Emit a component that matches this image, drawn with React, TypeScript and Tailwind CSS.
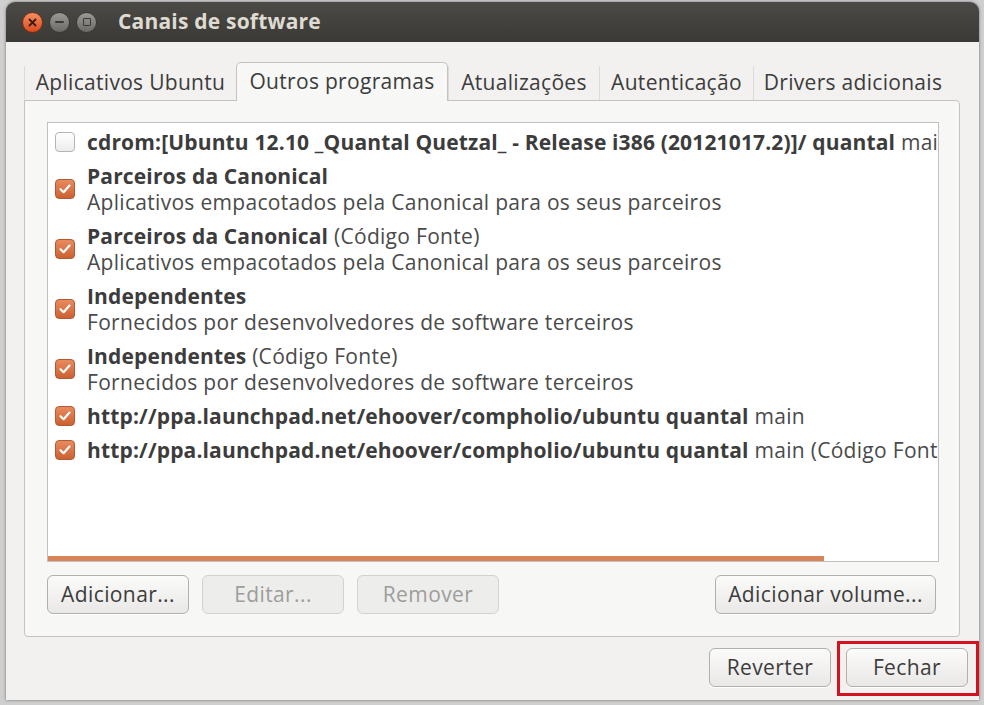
import React from 'react';

type Row = {
  checked: boolean;
  title: string;
  suffix?: string;
  desc?: string;
};

const rows: Row[] = [
  {
    checked: false,
    title: 'cdrom:[Ubuntu 12.10 _Quantal Quetzal_ - Release i386 (20121017.2)]/ quantal',
    suffix: 'main',
  },
  {
    checked: true,
    title: 'Parceiros da Canonical',
    desc: 'Aplicativos empacotados pela Canonical para os seus parceiros',
  },
  {
    checked: true,
    title: 'Parceiros da Canonical',
    suffix: '(Código Fonte)',
    desc: 'Aplicativos empacotados pela Canonical para os seus parceiros',
  },
  {
    checked: true,
    title: 'Independentes',
    desc: 'Fornecidos por desenvolvedores de software terceiros',
  },
  {
    checked: true,
    title: 'Independentes',
    suffix: '(Código Fonte)',
    desc: 'Fornecidos por desenvolvedores de software terceiros',
  },
  {
    checked: true,
    title: 'http://ppa.launchpad.net/ehoover/compholio/ubuntu quantal',
    suffix: 'main',
  },
  {
    checked: true,
    title: 'http://ppa.launchpad.net/ehoover/compholio/ubuntu quantal',
    suffix: 'main (Código Fonte)',
  },
];

const tabs = [
  { label: 'Aplicativos Ubuntu', w: 'w-[212px]', active: false },
  { label: 'Outros programas', w: 'w-[212px]', active: true },
  { label: 'Atualizações', w: 'w-[151px]', active: false },
  { label: 'Autenticação', w: 'w-[154px]', active: false },
  { label: 'Drivers adicionais', w: 'w-[199px]', active: false },
];

function CheckBox({ checked }: { checked: boolean }) {
  if (!checked) {
    return (
      <div className="h-[20px] w-[20px] shrink-0 rounded-[4px] border border-[#b4b4b4] bg-gradient-to-b from-[#ffffff] to-[#ececec]" />
    );
  }
  return (
    <div className="flex h-[20px] w-[20px] shrink-0 items-center justify-center rounded-[4px] border border-[#b25a32] bg-gradient-to-b from-[#e98a5e] to-[#cc6131]">
      <svg width="14" height="14" viewBox="0 0 14 14" fill="none">
        <path d="M2.5 7.2 L5.6 10.2 L11.5 3.6" stroke="#ffffff" strokeWidth="2.2" strokeLinecap="round" strokeLinejoin="round" />
      </svg>
    </div>
  );
}

function Button({ label, className = '', disabled = false }: { label: string; className?: string; disabled?: boolean }) {
  return (
    <div
      className={
        'flex h-[39px] items-center justify-center rounded-[6px] border text-[21px] tracking-[0.4px] ' +
        (disabled
          ? 'border-[#d2d2d0] bg-[#ededec] text-[#9d9d9b] '
          : 'border-[#b0b0ae] bg-gradient-to-b from-[#fbfbfa] to-[#e9e8e6] text-[#3c3c3c] shadow-[0_1px_0_#ffffff] ') +
        className
      }
    >
      {label}
    </div>
  );
}

export default function App() {
  return (
    <div className="h-[705px] w-[984px] overflow-hidden bg-[#cfcfcf] font-['Open_Sans',sans-serif]">
      <div className="relative ml-[6px] mt-[2px] flex h-[698px] w-[973px] flex-col overflow-hidden rounded-t-[9px] shadow-[0_0_3px_rgba(0,0,0,0.5)]">
        {/* title bar */}
        <div className="flex h-[40px] shrink-0 items-center bg-gradient-to-b from-[#4b4a46] to-[#3a3935] pl-[16px]">
          <div className="flex h-[21px] w-[21px] items-center justify-center rounded-full border border-[#7a2e12] bg-gradient-to-b from-[#f58e60] to-[#d94a1d]">
            <svg width="9" height="9" viewBox="0 0 9 9">
              <path d="M1.5 1.5 L7.5 7.5 M7.5 1.5 L1.5 7.5" stroke="#3b1a0e" strokeWidth="1.8" strokeLinecap="round" />
            </svg>
          </div>
          <div className="ml-[6px] flex h-[21px] w-[21px] items-center justify-center rounded-full border border-[#3a3936] bg-gradient-to-b from-[#9a9995] to-[#6b6a66]">
            <div className="h-[2px] w-[9px] rounded bg-[#3a3936]" />
          </div>
          <div className="ml-[6px] flex h-[21px] w-[21px] items-center justify-center rounded-full border border-[#3a3936] bg-gradient-to-b from-[#9a9995] to-[#6b6a66]">
            <div className="h-[8px] w-[8px] rounded-[1px] border-[1.5px] border-[#3a3936]" />
          </div>
          <div className="ml-[21px] text-[21px] font-bold tracking-[0.2px] text-[#dfdbd2]">Canais de software</div>
        </div>

        {/* body */}
        <div className="flex flex-1 flex-col bg-[#f2f1f0] pl-[18px] pt-[20px]">
          {/* tabs */}
          <div className="flex h-[38px] items-stretch">
            {tabs.map((t) => (
              <div
                key={t.label}
                className={
                  'flex items-center justify-center text-[21px] tracking-[0.3px] text-[#3c3c3c] ' +
                  t.w +
                  (t.active
                    ? ' relative z-10 -mb-px rounded-t-[5px] border border-b-0 border-[#c4c3c1] bg-[#f7f7f6]'
                    : ' mt-[4px] border-l border-[#dcdbd9]')
                }
              >
                {t.label}
              </div>
            ))}
          </div>

          {/* notebook page */}
          <div className="flex h-[537px] w-[936px] flex-col rounded-b-[4px] rounded-tr-[4px] border border-[#c4c3c1] bg-[#f7f7f6] px-[22px] pt-[21px]">
            <div className="flex h-[440px] w-[892px] flex-col overflow-hidden border border-[#c2c1bf] bg-white pt-[2px]">
              {rows.map((r, i) => (
                <div key={i} className="flex items-center py-[4px] pl-[7px]">
                  <CheckBox checked={r.checked} />
                  <div className="ml-[12px] min-w-0 flex-1 overflow-hidden whitespace-nowrap text-[21px] leading-[26px] tracking-[0.3px] text-[#3c3c3c]">
                    <div>
                      <span className="font-bold tracking-[0.15px]">{r.title}</span>
                      {r.suffix && <span className="text-[#4a4a4a]"> {r.suffix}</span>}
                    </div>
                    {r.desc && <div className="text-[#4a4a4a]">{r.desc}</div>}
                  </div>
                </div>
              ))}
              <div className="mt-auto h-[5px] w-[776px] bg-[#d8855c]" />
            </div>

            <div className="mt-[13px] flex">
              <Button label="Adicionar..." className="w-[142px]" />
              <Button label="Editar..." className="ml-[13px] w-[142px]" disabled />
              <Button label="Remover" className="ml-[13px] w-[142px]" disabled />
              <Button label="Adicionar volume..." className="ml-auto mr-[1px] w-[221px]" />
            </div>
          </div>

          {/* dialog buttons */}
          <div className="mr-[11px] mt-[11px] flex justify-end">
            <Button label="Reverter" className="w-[122px]" />
            <div className="relative ml-[15px]">
              <Button label="Fechar" className="w-[122px]" />
              <div className="pointer-events-none absolute -bottom-[9px] -left-[9px] -right-[11px] -top-[7px] border-[3px] border-[#d4121f]" />
            </div>
          </div>
        </div>
      </div>
    </div>
  );
}
